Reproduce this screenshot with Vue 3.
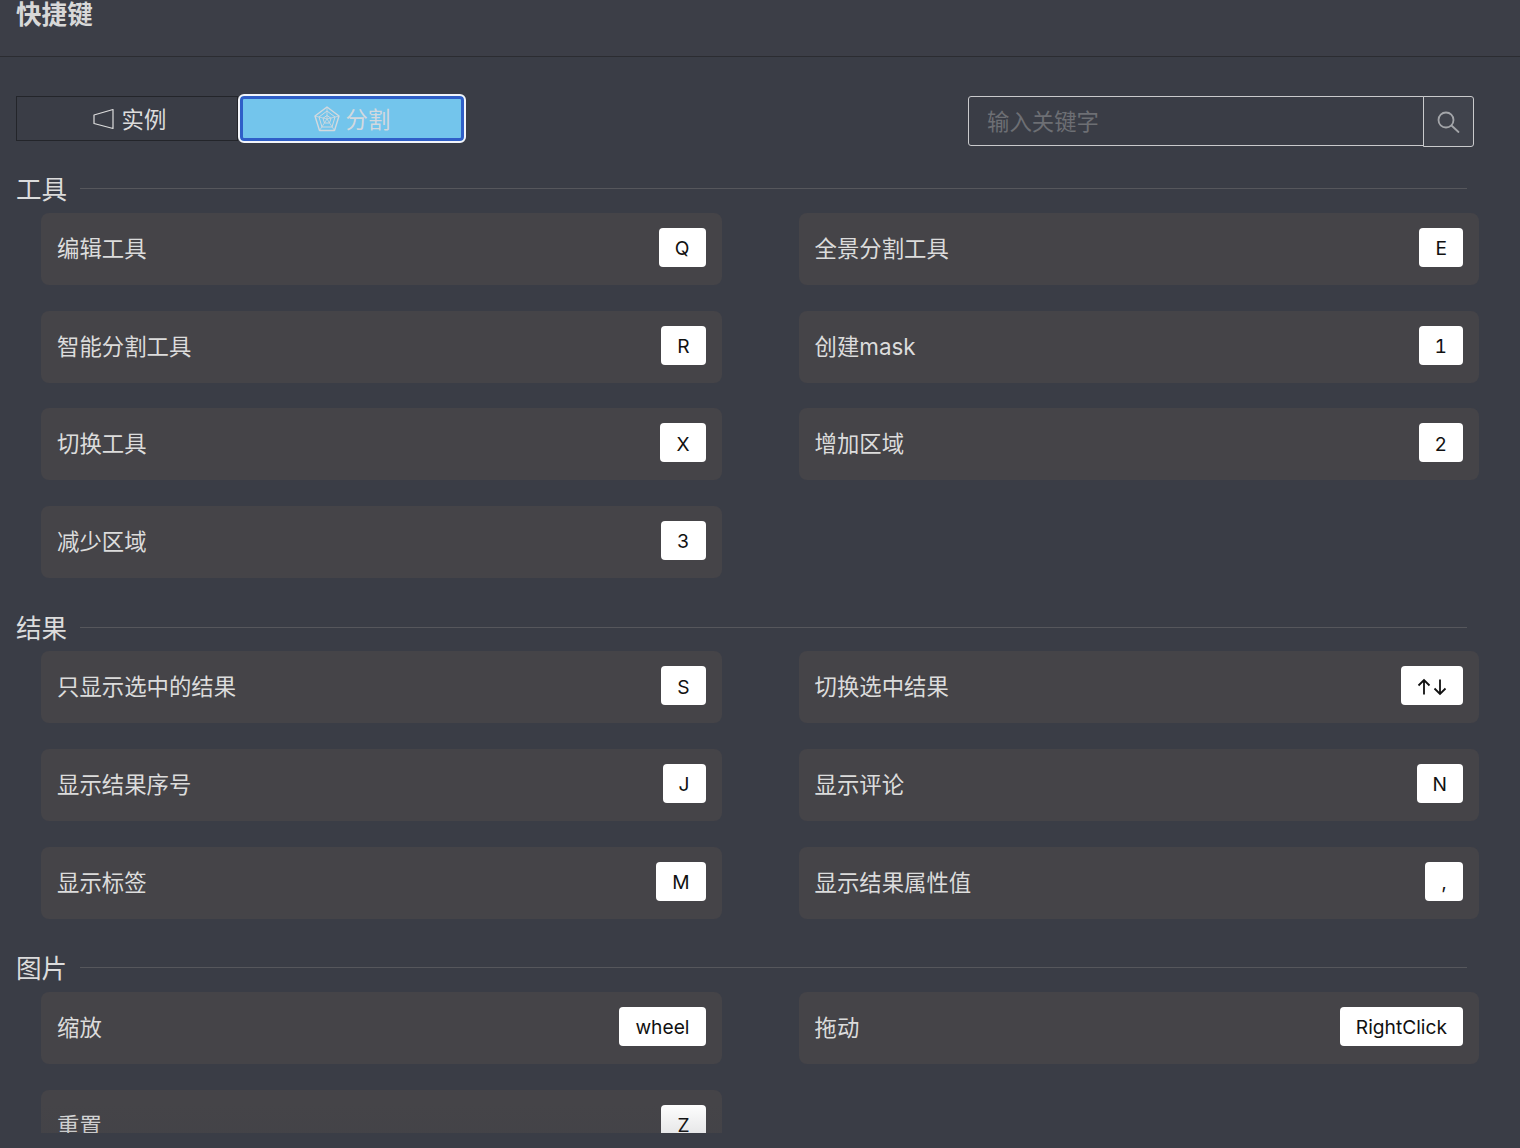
<script setup>
const sections = [
  { title: '工具', items: [
    ['编辑工具', 'Q'], ['全景分割工具', 'E'], ['智能分割工具', 'R'], ['创建mask', '1'],
    ['切换工具', 'X'], ['增加区域', '2'], ['减少区域', '3'],
  ] },
  { title: '结果', items: [
    ['只显示选中的结果', 'S'], ['切换选中结果', 'arrows'], ['显示结果序号', 'J'], ['显示评论', 'N'],
    ['显示标签', 'M'], ['显示结果属性值', ','],
  ] },
  { title: '图片', items: [
    ['缩放', 'wheel'], ['拖动', 'RightClick'], ['重置', 'Z'],
  ] },
]
</script>

<template>
  <div class="page">
    <header class="header"><h1 class="title">快捷键</h1></header>
    <main class="body">
      <div class="toolbar">
        <div class="segments">
          <button class="seg">
            <svg width="22" height="22" viewBox="0 0 22 22" fill="none" stroke="currentColor" stroke-width="1.2" stroke-linejoin="round">
              <path d="M2 7 21 1.500V20.500L2 15.500Z" />
            </svg>
            <span>实例</span>
          </button>
          <button class="seg seg-active">
            <svg width="26" height="26" viewBox="0 0 26 26" fill="none" stroke="currentColor" stroke-width="1" stroke-linejoin="round">
              <path d="M13 1 25 10 20.500 24.500H5.500L1 10Z" stroke-width="1.400" />
              <path d="M13 5 21 11 18 21H8L5 11Z" />
              <path d="M13 9.500 17 12.300 15.500 17H10.500L9 12.300Z" />
              <path d="M13 1V13M25 10 13 13M20.500 24.500 13 13M5.500 24.500 13 13M1 10 13 13" stroke-width=".8" />
            </svg>
            <span>分割</span>
          </button>
        </div>
        <div class="search">
          <input class="search-input" placeholder="输入关键字" />
          <button class="search-btn" aria-label="搜索">
            <svg width="24" height="24" viewBox="0 0 24 24" fill="none" stroke="currentColor" stroke-width="1.800">
              <circle cx="10" cy="10" r="7.500" />
              <path d="M15.500 15.500 22.500 22" stroke-linecap="round" />
            </svg>
          </button>
        </div>
      </div>

      <section v-for="section in sections" :key="section.title" class="section">
        <div class="section-head">
          <span class="section-title">{{ section.title }}</span>
          <span class="section-line"></span>
        </div>
        <div class="grid">
          <div v-for="item in section.items" :key="item[0]" class="card">
            <span class="label">{{ item[0] }}</span>
            <kbd class="key">
              <svg v-if="item[1] === 'arrows'" width="30" height="18" viewBox="0 0 30 18" fill="none" stroke="currentColor" stroke-width="1.800">
                <path d="M7 16.500V2M1.500 7.500 7 2l5.500 5.500" />
                <path d="M23 1.500V16M17.500 10.500 23 16l5.500-5.500" />
              </svg>
              <template v-else>{{ item[1] }}</template>
            </kbd>
          </div>
        </div>
      </section>
      <div class="fade"></div>
    </main>
  </div>
</template>

<style>
html, body { margin: 0; background: #3a3d46; }
</style>

<style scoped>
.page {
  width: 1520px;
  height: 1148px;
  overflow: hidden;
  background: #3a3d46;
  color: #dcdcdc;
  font-family: Inter, "Noto Sans CJK SC", sans-serif;
}
.header {
  height: 56px;
  border-bottom: 1px solid #2b2c31;
  background: #3c3e47;
}
.title {
  margin: 0;
  padding-left: 16px;
  font-size: 25.600px;
  line-height: 30px;
  font-weight: 700;
  color: #d8d8d8;
}
.body {
  position: relative;
  height: 1076px;
  overflow: hidden;
  padding: 0 0 0 16px;
}
.toolbar {
  display: flex;
  justify-content: space-between;
  align-items: flex-start;
  padding-top: 39px;
  width: 1458px;
  height: 119.900px;
  box-sizing: border-box;
}
.segments {
  display: flex;
  align-items: center;
  height: 49px;
  margin-top: -2px;
}
.seg {
  width: 222px;
  height: 45px;
  box-sizing: border-box;
  display: flex;
  align-items: center;
  justify-content: center;
  gap: 8px;
  padding: 0 0 0 4px;
  border: 1px solid #23252a;
  background: transparent;
  color: #dcdcdc;
  font: inherit;
  font-size: 22.400px;
}
.seg span { margin-top: -2px; }
.seg-active {
  width: 228px;
  height: 49px;
  gap: 6px;
  padding: 0;
  border: 2px solid #f2f5fa;
  border-radius: 6px;
  background: #73c5ec;
  box-shadow: inset 0 0 0 3px #2f5fc8;
  color: #d3d9de;
}
.search {
  display: flex;
  width: 506px;
  height: 50px;
}
.search-input {
  flex: 1;
  min-width: 0;
  height: 50px;
  box-sizing: border-box;
  padding: 0 18px;
  border: 1px solid #c9cacc;
  border-radius: 3px 0 0 3px;
  background: transparent;
  color: #dcdcdc;
  font: inherit;
  font-size: 22.400px;
  outline: none;
}
.search-input::placeholder { color: #6d6f74; opacity: 1; }
.search-btn {
  width: 51px;
  height: 51px;
  margin-left: -1px;
  box-sizing: border-box;
  display: flex;
  align-items: center;
  justify-content: center;
  padding: 0 2px 0 0;
  border: 1px solid #c9cacc;
  border-radius: 0 3px 3px 0;
  background: #40434c;
  color: #a3a5a9;
}
.section { margin-bottom: 37.400px; }
.section-head {
  display: flex;
  align-items: center;
  width: 1451px;
  height: 24px;
  margin-bottom: 12px;
}
.section-title {
  font-size: 25.600px;
  line-height: 28px;
  padding-top: 3px;
  color: #dcdcdc;
  margin-right: 13px;
  white-space: nowrap;
}
.section-line {
  flex: 1;
  height: 1px;
  background: #56575c;
}
.grid {
  display: grid;
  grid-template-columns: 1fr 1fr;
  column-gap: 77px;
  row-gap: 25.670px;
  width: 1438px;
  margin-left: 25px;
}
.card {
  height: 72px;
  box-sizing: border-box;
  display: flex;
  align-items: center;
  justify-content: space-between;
  padding: 0 16px;
  border-radius: 8px;
  background: #454448;
}
.label {
  font-size: 22.400px;
  line-height: 28px;
  color: #dcdcdc;
}
.key {
  height: 39px;
  min-width: 38px;
  box-sizing: border-box;
  display: flex;
  align-items: center;
  justify-content: center;
  padding: 2px 16px 0;
  border-radius: 4px;
  background: #fff;
  color: #111;
  font-family: Inter, sans-serif;
  font-size: 19.200px;
  font-variant-numeric: tabular-nums;
  margin-top: -3px;
}
.fade {
  position: absolute;
  left: 0;
  right: 0;
  bottom: 0;
  height: 30px;
  background: linear-gradient(rgba(58, 61, 70, 0), rgba(58, 61, 70, 0.12));
}
</style>
